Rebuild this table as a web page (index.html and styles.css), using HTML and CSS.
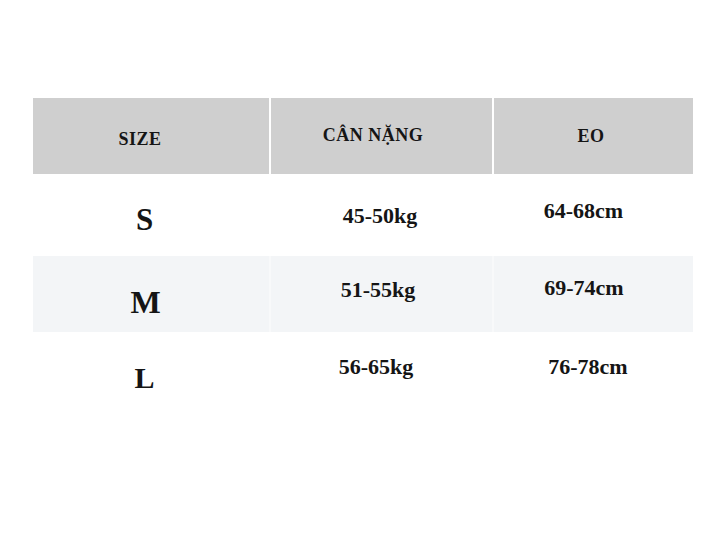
FILE: index.html
```html
<!DOCTYPE html>
<html lang="vi">
<head>
<meta charset="utf-8">
<title>Bảng size</title>
<link rel="stylesheet" href="styles.css">
</head>
<body>
<div class="chart">
  <div class="row head">
    <div class="cell h-size">SIZE</div>
    <div class="cell h-weight">CÂN NẶNG</div>
    <div class="cell h-waist">EO</div>
  </div>
  <div class="row row-s">
    <div class="cell size s-size">S</div>
    <div class="cell val s-weight">45-50kg</div>
    <div class="cell val s-waist">64-68cm</div>
  </div>
  <div class="row row-m alt">
    <div class="cell size m-size">M</div>
    <div class="cell val m-weight">51-55kg</div>
    <div class="cell val m-waist">69-74cm</div>
  </div>
  <div class="row row-l">
    <div class="cell size l-size">L</div>
    <div class="cell val l-weight">56-65kg</div>
    <div class="cell val l-waist">76-78cm</div>
  </div>
</div>
</body>
</html>
```

FILE: styles.css
```css
html, body {
  margin: 0;
  padding: 0;
  background: #ffffff;
}
body {
  width: 728px;
  height: 546px;
  overflow: hidden;
  font-family: "Liberation Serif", "Times New Roman", serif;
  font-weight: bold;
  color: #151515;
}
.chart {
  padding: 98px 0 0 33px;
  display: flex;
  flex-direction: column;
}
.row {
  display: grid;
  grid-template-columns: 236px 221px 199px;
  column-gap: 2px;
  width: 660px;
}
.head { height: 76px; }
.head .cell { background: #cfcfcf; }
.row-s { height: 82px; }
.row-m { height: 76px; }
.row-l { height: 80px; }
.alt { background: #f8f9fa; }
.alt .cell { background: #f3f5f7; }

.cell {
  text-align: center;
  line-height: 1;
  white-space: nowrap;
  box-sizing: border-box;
}
.head .cell {
  font-size: 18px;
  letter-spacing: 0.5px;
}
.size.s-size { font-size: 31px; }
.size.m-size { font-size: 32px; }
.size.l-size { font-size: 30px; }
.val { font-size: 22px; }

/* header */
.h-size   { padding: 32px 22px 0 0; }
.h-weight { padding: 28px 17px 0 0; }
.h-waist  { padding: 29px 5px 0 0; }

/* row S */
.s-size   { padding: 30px 13px 0 0; }
.s-weight { padding: 31px 3px 0 0; }
.s-waist  { padding: 26px 20px 0 0; }

/* row M */
.m-size   { padding: 30px 11px 0 0; }
.m-weight { padding: 23px 7px 0 0; }
.m-waist  { padding: 21px 19px 0 0; }

/* row L */
.l-size   { padding: 31px 13px 0 0; }
.l-weight { padding: 24px 11px 0 0; }
.l-waist  { padding: 24px 11px 0 0; }
```
